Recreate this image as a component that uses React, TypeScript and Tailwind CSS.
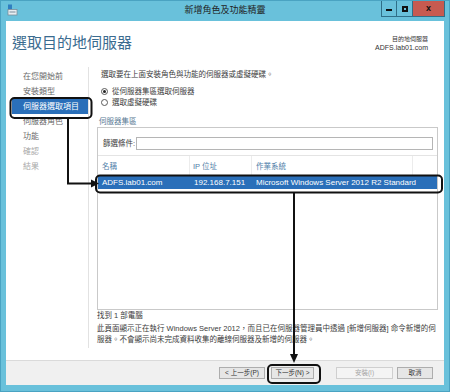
const NAV = [
  { label: "在您開始前", state: "normal" },
  { label: "安裝類型", state: "normal" },
  { label: "伺服器選取項目", state: "active" },
  { label: "伺服器角色", state: "normal" },
  { label: "功能", state: "normal" },
  { label: "確認", state: "disabled" },
  { label: "結果", state: "disabled" },
];

function Radio({ checked, label }: { checked?: boolean; label: string }) {
  return (
    <div className="flex items-center h-[11px] pl-[4px] gap-[4px]">
      <span className="w-[7px] h-[7px] rounded-full border border-[#5a5a5a] bg-white flex items-center justify-center">
        {checked && <span className="w-[3px] h-[3px] rounded-full bg-[#222]" />}
      </span>
      <span>{label}</span>
    </div>
  );
}

function Btn({ label, className, disabled }: { label: string; className: string; disabled?: boolean }) {
  return (
    <div
      className={`h-[12px] flex items-center justify-center text-[6.5px] border ${
        disabled ? "border-[#cfcfcf] bg-[#f4f4f4] text-[#a8a8a8]" : "border-[#adadad] bg-[#e6e6e6] text-[#333]"
      } ${className}`}
    >
      {label}
    </div>
  );
}

export default function App() {
  return (
    <div className="relative w-[450px] h-[392px] bg-[#69c1db] border border-[#4aa3c2] flex flex-col overflow-hidden font-['Liberation_Sans','Noto_Sans_CJK_TC',sans-serif] text-[#3c3c3c]">
      {/* title bar */}
      <div className="h-[20px] flex items-start relative">
        <div className="pl-[6px] pt-[3px]">
          <svg width="11" height="12" viewBox="0 0 11 12">
            <rect x="1" y="0.5" width="4" height="5" fill="#2f7fc0" />
            <rect x="1" y="5.5" width="9" height="5.5" fill="#e8eef2" stroke="#7a8c99" strokeWidth="0.8" />
            <rect x="2.5" y="7.5" width="6" height="1" fill="#7a8c99" />
          </svg>
        </div>
        <div className="absolute left-0 right-0 top-[3px] text-center text-[9px] leading-[12px] text-[#222]">
          新增角色及功能精靈
        </div>
        <div className="ml-auto mr-[4px] flex h-[16px] border border-t-0 border-[#2f6f88]">
          <div className="w-[15px] flex items-end justify-center pb-[5px] border-r border-[#2f6f88]">
            <span className="w-[6px] h-[2px] bg-[#111]" />
          </div>
          <div className="w-[16px] flex items-center justify-center border-r border-[#2f6f88]">
            <span className="w-[6px] h-[6px] border-[2px] border-[#111]" />
          </div>
          <div className="w-[31px] bg-[#c75a50] flex items-center justify-center text-[9px] font-bold text-[#111] leading-none">
            x
          </div>
        </div>
      </div>

      {/* white window body */}
      <div className="flex-1 mx-[5px] mb-[6px] bg-white flex flex-col">
        <div className="h-[46px] flex justify-between">
          <div className="pl-[6px] pt-[12px] text-[15px] leading-[20px] text-[#3a6b8f]">選取目的地伺服器</div>
          <div className="pr-[16px] pt-[14px] text-right text-[#333]">
            <div className="text-[6px] leading-[8px]">目的地伺服器</div>
            <div className="text-[7px] leading-[9px]">ADFS.lab01.com</div>
          </div>
        </div>

        <div className="flex-1 flex">
          {/* nav */}
          <div className="w-[83px] mb-[12px] pt-[2px] border-r border-[#e2e2e2] text-[8px]">
            {NAV.map((n) =>
              n.state === "active" ? (
                <div key={n.label} className="h-[15px] leading-[15px] ml-[6px] pl-[11px] bg-[#2a6fb9] text-white">
                  {n.label}
                </div>
              ) : (
                <div
                  key={n.label}
                  className={`h-[15px] leading-[15px] pl-[17px] ${n.state === "disabled" ? "text-[#a9a9a9]" : "text-[#6a6a6a]"}`}
                >
                  {n.label}
                </div>
              )
            )}
          </div>

          {/* main */}
          <div className="flex-1 pl-[8px] pr-[6px] pt-[2px] text-[7.5px]">
            <div className="pl-[4px] leading-[11px]">選取要在上面安裝角色與功能的伺服器或虛擬硬碟。</div>
            <div className="mt-[6px]">
              <Radio checked label="從伺服器集區選取伺服器" />
              <Radio label="選取虛擬硬碟" />
            </div>
            <div className="mt-[8px] pl-[2px] leading-[11px] text-[#5a7a94]">伺服器集區</div>
            <div className="h-[183px] border border-[#c9c9c9] flex flex-col">
              <div className="h-[28px] flex items-start pt-[9px] pl-[5px] pr-[4px] border-b border-[#e4e4e4]">
                <span className="leading-[13px] w-[33px]">篩選條件:</span>
                <div className="flex-1 h-[13px] border border-[#b5b5b5] bg-white" />
              </div>
              <div className="h-[19px] flex text-[#4f7ea8]">
                <div className="w-[92px] pl-[4px] pt-[5px] border-r border-[#ececec]">名稱</div>
                <div className="w-[62px] pl-[3px] pt-[5px] border-r border-[#ececec]">IP 位址</div>
                <div className="w-[161px] pl-[4px] pt-[5px] border-r border-[#ececec]">作業系統</div>
              </div>
              <div className="mt-[1px] h-[13px] flex items-center bg-[#2a6fb9] text-white text-[8px]">
                <div className="w-[92px] pl-[4px]">ADFS.lab01.com</div>
                <div className="w-[62px] pl-[4px]">192.168.7.151</div>
                <div className="pl-[4px]">Microsoft Windows Server 2012 R2 Standard</div>
              </div>
            </div>
            <div className="leading-[10px] pt-[1px]">找到 1 部電腦</div>
            <div className="mt-[2px] leading-[11px] pr-[2px]">
              此頁面顯示正在執行 Windows Server 2012，而且已在伺服器管理員中透過 [新增伺服器] 命令新增的伺服器。不會顯示尚未完成資料收集的離線伺服器及新增的伺服器。
            </div>
          </div>
        </div>

        {/* footer */}
        <div className="h-[25px] bg-[#f0f0f0] border-t border-[#dadada] flex items-start pt-[6px] pr-[11px] justify-end">
          <Btn label="< 上一步(P)" className="w-[46px]" />
          <Btn label="下一步(N) >" className="w-[43px] ml-[6px]" />
          <Btn label="安裝(I)" className="w-[57px] ml-[22px]" disabled />
          <Btn label="取消" className="w-[36px] ml-[4px]" />
        </div>
      </div>

      {/* annotation overlay */}
      <svg className="absolute left-0 top-0 pointer-events-none" width="450" height="392" viewBox="0 0 450 392">
        <g fill="none" stroke="#111" strokeWidth="2">
          <rect x="9.5" y="97" width="81" height="20" rx="4" />
          <rect x="95" y="174.5" width="346" height="17" rx="4" />
          <rect x="267" y="364" width="52" height="18" rx="4" />
          <path d="M67 117 V182.5 H91" />
          <path d="M293 191.5 V354" />
        </g>
        <polygon points="90,178.5 98,182.5 90,186.5" fill="#111" />
        <polygon points="289,353 293,362 297,353" fill="#111" />
      </svg>
    </div>
  );
}
